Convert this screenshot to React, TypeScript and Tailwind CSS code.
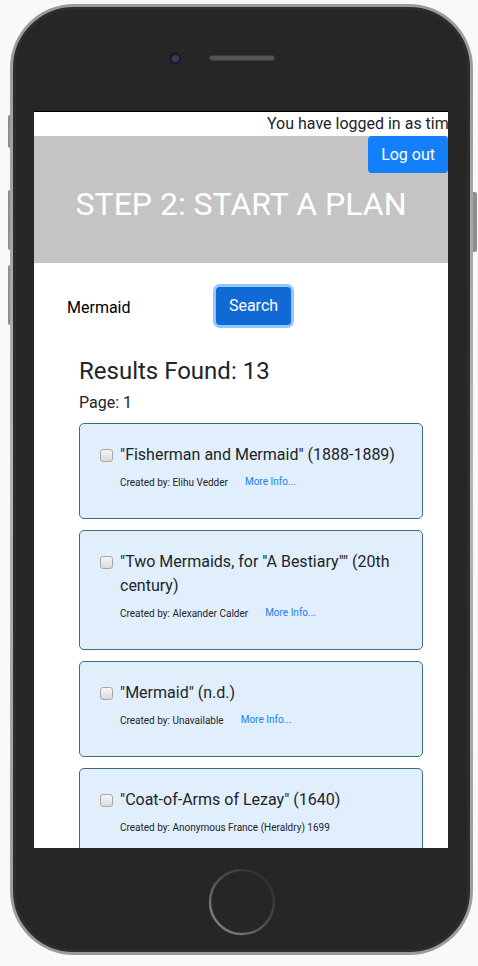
import React from "react";

type Result = { title: string; author: string; more: boolean };

const results: Result[] = [
  { title: '"Fisherman and Mermaid" (1888-1889)', author: "Elihu Vedder", more: true },
  { title: '"Two Mermaids, for "A Bestiary"" (20th century)', author: "Alexander Calder", more: true },
  { title: '"Mermaid" (n.d.)', author: "Unavailable", more: true },
  { title: '"Coat-of-Arms of Lezay" (1640)', author: "Anonymous France (Heraldry) 1699", more: false },
];

const ResultCard = ({ item }: { item: Result }) => (
  <div className="rounded-[5px] border border-[#3b6e7c] bg-[#e1eefb] pl-[20px] pr-[20px] pt-[19px] pb-[28px]">
    <div className="flex items-start">
      {/* checkbox */}
      <span className="mt-[6px] h-[13px] w-[13px] shrink-0 rounded-[3px] border border-[#a8a8a8] bg-linear-to-b from-[#f6f6f6] to-[#d9d9d9]" />
      <div className="ml-[7px]">
        <p className="text-[16px] leading-[24px] text-[#212529]">{item.title}</p>
        <div className="mt-[9px] flex items-start text-[10px] leading-[14px] text-[#212529]">
          <span>Created by: {item.author}</span>
          {item.more && <a className="ml-[17px] -mt-px text-[#1a7ef7]">More Info...</a>}
        </div>
      </div>
    </div>
  </div>
);

const HomeButton = () => (
  <svg width="70" height="70" viewBox="0 0 70 70">
    <defs>
      <linearGradient id="ring" x1="1" y1="0" x2="0" y2="1">
        <stop offset="0" stopColor="#262626" />
        <stop offset="0.45" stopColor="#4a4a4a" />
        <stop offset="1" stopColor="#8c8c8c" />
      </linearGradient>
    </defs>
    <circle cx="35" cy="35" r="32" fill="#262626" stroke="url(#ring)" strokeWidth="2.5" />
  </svg>
);

export default function App() {
  return (
    <div className="h-[966px] w-[478px] overflow-hidden bg-[#f9f9f9] pl-[10px] pt-[4px] font-['Roboto','Liberation_Sans',sans-serif]">
      <div className="relative h-[951px] w-[463px]">
        {/* side buttons */}
        <span className="absolute left-[-2px] top-[111px] h-[33px] w-[4px] rounded-l-[2px] bg-[#8e8e8e]" />
        <span className="absolute left-[-2px] top-[186px] h-[60px] w-[4px] rounded-l-[2px] bg-[#8e8e8e]" />
        <span className="absolute left-[-2px] top-[261px] h-[60px] w-[4px] rounded-l-[2px] bg-[#8e8e8e]" />
        <span className="absolute right-[-4px] top-[188px] h-[60px] w-[4px] rounded-r-[2px] bg-[#8e8e8e]" />

        <div className="relative h-full w-full rounded-[64px] bg-linear-to-b from-[#9a9a9a] via-[#b5b5b5] to-[#9a9a9a] p-[3px]">
          <div className="flex h-full w-full flex-col rounded-[61px] border-[3px] border-[#2d2d2d] bg-[#262626]">
            {/* top bezel */}
            <div className="flex h-[101px] items-start pl-[153px] pt-[42px]">
              <span className="flex h-[12px] w-[12px] items-center justify-center rounded-full bg-[#1c1c1c]">
                <span className="h-[7px] w-[7px] rounded-full bg-[#3f3768]" />
              </span>
              <span className="ml-[28px] mt-[3px] h-[6px] w-[66px] rounded-full border border-[#3a3a3a] bg-[#555555]" />
            </div>

            {/* screen */}
            <div className="ml-[18px] h-[737px] w-[414px] overflow-hidden border-t border-black bg-white text-[#212529]">
              <div className="h-[24px] overflow-hidden whitespace-nowrap pl-[233px] text-[16px] leading-[24px]">
                You have logged in as timothy
              </div>

              <div className="flex h-[127px] flex-col bg-[#c4c4c4]">
                <button className="h-[37px] self-end rounded-[4px] bg-[#137ffb] px-[13px] text-[16px] leading-[24px] text-white">
                  Log out
                </button>
                <h1 className="mt-[11px] text-center text-[32px] leading-[41px] text-white">STEP 2: START A PLAN</h1>
              </div>

              <div className="flex items-center pl-[33px] pt-[24px]">
                <span className="w-[149px] pt-[4px] text-[16px] leading-[24px] text-black">Mermaid</span>
                <button className="h-[38px] w-[75px] rounded-[4px] bg-[#1069d4] text-[16px] leading-[24px] text-white shadow-[0_0_0_3px_rgba(38,143,255,0.5)]">
                  Search
                </button>
              </div>

              <div className="ml-[45px] mt-[32px] w-[344px]">
                <h2 className="text-[24px] leading-[29px]">Results Found: 13</h2>
                <p className="mt-[5px] text-[16px] leading-[24px]">Page: 1</p>
                <div className="mt-[8px] flex flex-col gap-[11px]">
                  {results.map((r) => (
                    <ResultCard key={r.title} item={r} />
                  ))}
                </div>
              </div>
            </div>

            {/* bottom bezel */}
            <div className="flex flex-1 justify-center pt-[19px]">
              <HomeButton />
            </div>
          </div>
        </div>
      </div>
    </div>
  );
}
